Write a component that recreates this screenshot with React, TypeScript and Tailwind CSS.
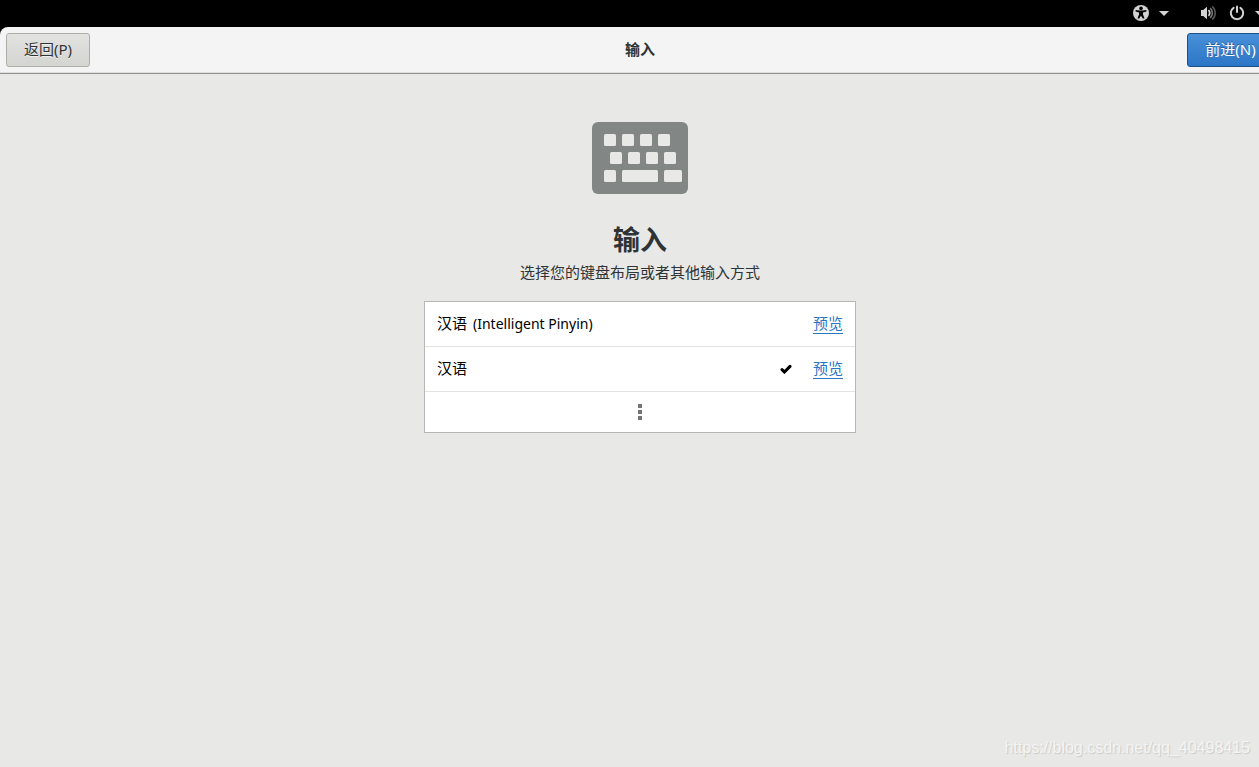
function AccessibilityIcon() {
  return (
    <svg viewBox="0 0 16 16" className="size-4" aria-hidden="true">
      <circle cx="8" cy="8" r="8" fill="#d3d3d3" />
      <circle cx="8" cy="3.4" r="1.8" fill="#000" />
      <path
        d="M2.6 5 L6.4 5.6 H9.6 L13.4 5 V6.4 L10 7.4 V9.6 L11.6 13.6 H9.8 L8 10.8 L6.2 13.6 H4.4 L6 9.6 V7.4 L2.6 6.4 Z"
        fill="#000"
      />
    </svg>
  )
}

function ArrowIcon() {
  return (
    <svg viewBox="0 0 10 5" className="h-[5px] w-[10px] shrink-0" aria-hidden="true">
      <path d="M0 0 H10 L5 5 Z" fill="#d3d3d3" />
    </svg>
  )
}

function VolumeIcon() {
  return (
    <svg viewBox="0 0 16 16" className="size-4" aria-hidden="true">
      <path d="M1 5 H3.2 L7 1.8 V14.2 L3.2 11 H1 Z" fill="#d3d3d3" />
      <path d="M8.4 5.2 C10.2 6.8 10.2 9.2 8.4 10.8" fill="none" stroke="#d3d3d3" strokeWidth="1.8" />
      <path d="M10.2 3.2 C13 5.8 13 10.2 10.2 12.8" fill="none" stroke="#777" strokeWidth="1.6" />
      <path d="M12.2 1.4 C16.2 5 16.2 11 12.2 14.6" fill="none" stroke="#555" strokeWidth="1.6" />
    </svg>
  )
}

function PowerIcon() {
  return (
    <svg viewBox="0 0 16 16" className="size-4" aria-hidden="true">
      <path d="M4.6 2.8 A6.2 6.2 0 1 0 11.4 2.8" fill="none" stroke="#d3d3d3" strokeWidth="2" strokeLinecap="round" />
      <path d="M8 1.5 V7" stroke="#d3d3d3" strokeWidth="2" strokeLinecap="round" />
    </svg>
  )
}

function KeyboardIcon() {
  return (
    <svg viewBox="0 0 96 72" className="h-[72px] w-24" aria-hidden="true">
      <rect width="96" height="72" rx="6" fill="#828685" />
      <g fill="#e8e8e6">
        {[12, 30, 48, 66].map((x) => (
          <rect key={x} x={x} y="12" width="12" height="12" rx="1.5" />
        ))}
        {[18, 36, 54, 72].map((x) => (
          <rect key={x} x={x} y="30" width="12" height="12" rx="1.5" />
        ))}
        <rect x="12" y="48" width="12" height="12" rx="1.5" />
        <rect x="30" y="48" width="36" height="12" rx="1.5" />
        <rect x="72" y="48" width="18" height="12" rx="1.5" />
      </g>
    </svg>
  )
}

function CheckIcon() {
  return (
    <svg viewBox="0 0 12 10" className="h-[10px] w-3" aria-hidden="true">
      <path d="M2 5.6 L4.4 8 L10 2.4" fill="none" stroke="#000" strokeWidth="3" strokeLinecap="round" />
    </svg>
  )
}

const layouts = [
  { name: '汉语', engine: '(Intelligent Pinyin)', selected: false },
  { name: '汉语', engine: '', selected: true },
]

export default function App() {
  return (
    <div className="min-h-screen overflow-hidden bg-black font-['Noto_Sans','Noto_Sans_CJK_SC',sans-serif] text-[15px] text-[#2e3436]">
      {/* the screen runs a little past the right edge of the window */}
      <div className="flex min-h-screen w-[calc(100%+21px)] flex-col">
        <div className="flex h-[27px] items-center justify-end pb-px">
          <button type="button" aria-label="辅助功能" className="flex items-center gap-[10px]">
            <AccessibilityIcon />
            <ArrowIcon />
          </button>
          <button type="button" aria-label="系统" className="mr-[15px] ml-[31px] flex items-center gap-[10px]">
            <span className="flex gap-[13px]">
              <VolumeIcon />
              <PowerIcon />
            </span>
            <ArrowIcon />
          </button>
        </div>

        <header className="grid h-[47px] grid-cols-3 items-center rounded-t-lg border-b border-[#8f8f8c] bg-[#f4f4f4] px-[6px] shadow-[inset_0_-1px_#dededc]">
          <button
            type="button"
            className="h-[34px] w-[84px] justify-self-start rounded-[3px] border border-[#aeaea9] bg-linear-to-b from-[#e2e2e0] to-[#d4d4d1] pb-px [text-shadow:0_1px_#f0f0ee]"
          >
            返回(P)
          </button>
          <h1 className="pb-[2px] text-center font-bold">输入</h1>
          <button
            type="button"
            className="h-[34px] w-[87px] justify-self-end rounded-[3px] border border-[#1c5187] bg-linear-to-b from-[#4a90d9] to-[#2a76c6] pb-px text-white [text-shadow:0_-1px_#235f9e]"
          >
            前进(N)
          </button>
        </header>

        <main className="flex flex-1 flex-col items-center bg-[#e8e8e6] pt-12">
          <KeyboardIcon />
          <h2 className="mt-7 text-[27px] leading-9 font-bold">输入</h2>
          <p className="leading-7">选择您的键盘布局或者其他输入方式</p>

          <ul className="mt-[15px] w-[432px] divide-y divide-[#e3e3e1] border border-[#b6b6b3] bg-white text-black">
            {layouts.map((layout) => (
              <li key={layout.engine} className="flex h-[45px] items-center px-3 pb-px">
                <span className="flex flex-1 items-baseline gap-[6px]">
                  {layout.name}
                  {layout.engine && <span className="text-[14px]">{layout.engine}</span>}
                </span>
                {layout.selected && <CheckIcon />}
                <a href="#preview" className="ml-[21px] border-b border-[#2a76c6] leading-5 text-[#2a76c6]">
                  预览
                </a>
              </li>
            ))}
            <li>
              <button type="button" aria-label="更多" className="flex h-10 w-full flex-col items-center justify-center gap-[2px]">
                <span className="size-1 bg-[#747474]" />
                <span className="size-1 bg-[#747474]" />
                <span className="size-1 bg-[#747474]" />
              </button>
            </li>
          </ul>

          <p className="mt-auto self-end pr-[30px] pb-[7px] font-['Liberation_Sans',sans-serif] text-[16px] text-[#f4f4f3] [text-shadow:1px_1px_1px_#cacac8]">
            https://blog.csdn.net/qq_40498415
          </p>
        </main>
      </div>
    </div>
  )
}
